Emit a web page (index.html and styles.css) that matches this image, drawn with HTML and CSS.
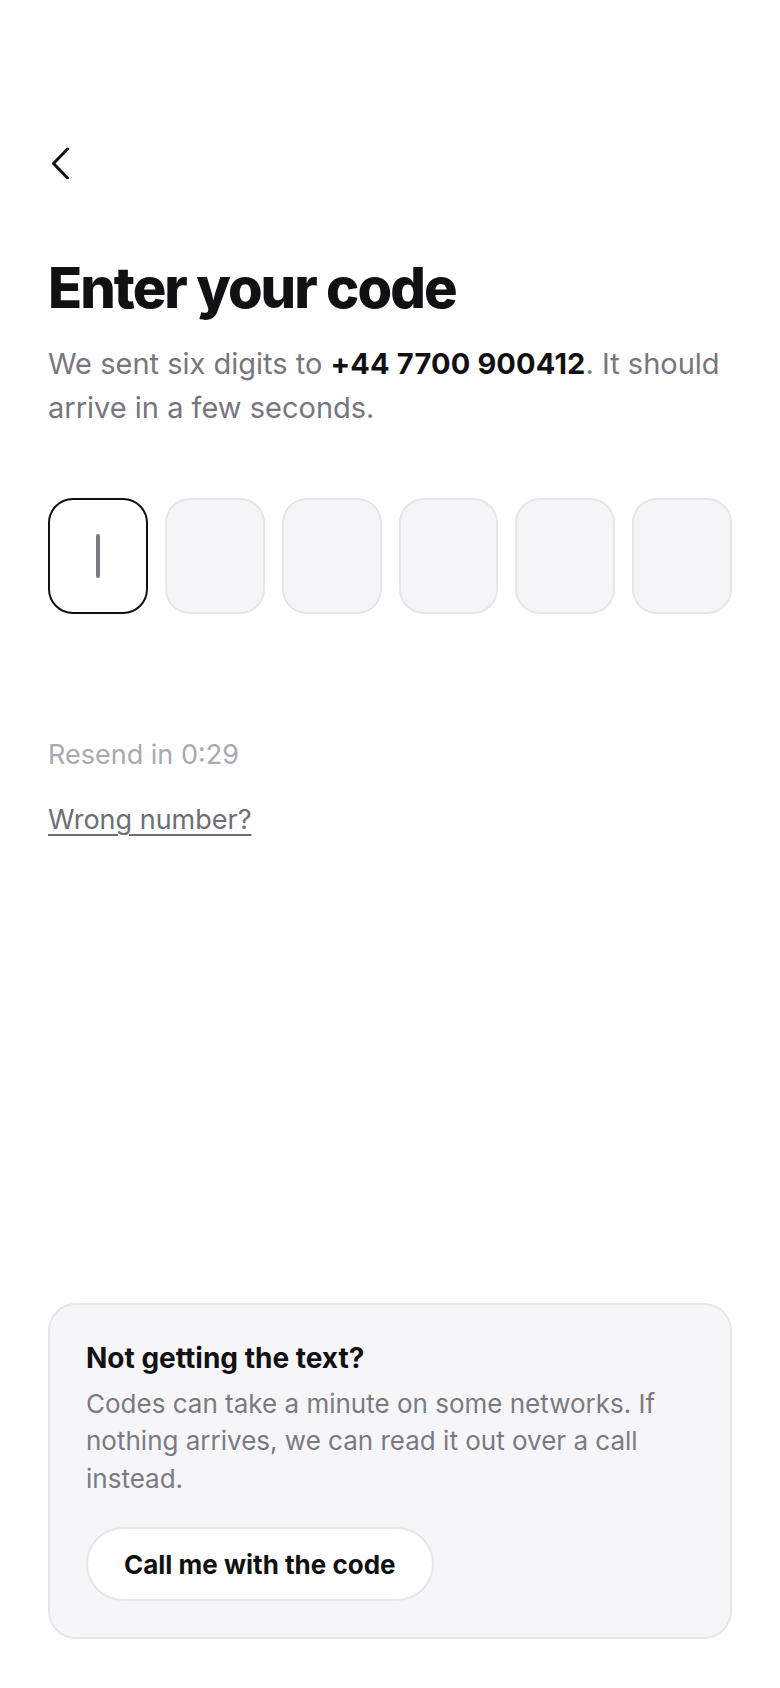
FILE: index.html
```html
<!DOCTYPE html>
<html lang="en">
<head>
<meta charset="utf-8">
<title>Enter your code</title>
<link rel="stylesheet" href="styles.css">
</head>
<body>
<main class="screen">
  <div class="top">
    <button class="back" aria-label="Back">
      <svg width="20" height="32" viewBox="0 0 20 32" fill="none" stroke="#111114" stroke-width="3" stroke-linecap="round" stroke-linejoin="round"><path d="M17.5 2 L3.5 16.5 L17.5 31"/></svg>
    </button>
    <h1 class="title">Enter your code</h1>
    <p class="lead">We sent six digits to <strong>+44 7700 900412</strong>. It should arrive in a few seconds.</p>
    <div class="otp">
      <div class="cell active"><span class="caret"></span></div>
      <div class="cell"></div>
      <div class="cell"></div>
      <div class="cell"></div>
      <div class="cell"></div>
      <div class="cell"></div>
    </div>
    <p class="resend">Resend in 0:29</p>
    <a class="wrong" href="#">Wrong number?</a>
  </div>
  <section class="help">
    <h2 class="help-title">Not getting the text?</h2>
    <p class="help-text">Codes can take a minute on some networks. If nothing arrives, we can read it out over a call instead.</p>
    <button class="call">Call me with the code</button>
  </section>
</main>
</body>
</html>
```

FILE: styles.css
```css
* { box-sizing: border-box; }
html, body { margin: 0; padding: 0; background: #ffffff; }
body {
  font-family: Inter, "Noto Sans", "Liberation Sans", sans-serif;
  color: #111114;
}
.screen {
  min-height: 1688px;
  display: flex;
  flex-direction: column;
  padding: 147px 48px 49px;
}
.top { display: flex; flex-direction: column; align-items: flex-start; }
.back {
  border: 0;
  background: none;
  padding: 0;
  margin: 0 0 0 2px;
  width: 20px;
  height: 32px;
  display: block;
  cursor: pointer;
}
.back svg { display: block; }
.title {
  margin: 79px 0 0;
  font-size: 56px;
  line-height: 60px;
  font-weight: 800;
  letter-spacing: -0.035em;
  color: #111114;
}
.lead {
  margin: 24px 0 0;
  font-size: 29px;
  line-height: 44px;
  color: #76767e;
  font-weight: 400;
}
.lead strong { color: #111114; font-weight: 700; letter-spacing: 0.005em; }
.otp {
  margin-top: 68px;
  width: 100%;
  display: grid;
  grid-template-columns: repeat(6, 1fr);
  gap: 17px;
}
.cell {
  height: 116px;
  border-radius: 25px;
  background: #f5f5f7;
  border: 2px solid #e6e6e9;
  display: flex;
  align-items: center;
  justify-content: center;
}
.cell.active {
  background: #ffffff;
  border-color: #111114;
}
.caret {
  width: 4px;
  height: 44px;
  border-radius: 2px;
  background: #7a7a7f;
}
.resend {
  margin: 121px 0 0;
  font-size: 27px;
  line-height: 40px;
  color: #a9a9b1;
}
.wrong {
  margin-top: 25px;
  font-size: 27px;
  line-height: 40px;
  color: #6e6e76;
  text-decoration: underline;
  text-underline-offset: 5px;
  text-decoration-thickness: 2px;
}
.help {
  margin-top: auto;
  background: #f6f6f8;
  border: 2px solid #e6e6e9;
  border-radius: 28px;
  padding: 35px 36px 36px;
}
.help-title {
  margin: 0;
  font-size: 28px;
  line-height: 36px;
  font-weight: 700;
  color: #111114;
}
.help-text {
  margin: 9px 0 0;
  font-size: 26px;
  line-height: 37.5px;
  color: #7a7a82;
}
.call {
  margin-top: 30px;
  height: 74px;
  padding: 0 36px;
  border-radius: 37px;
  background: #ffffff;
  border: 2px solid #e6e6e9;
  font-family: Inter, "Noto Sans", "Liberation Sans", sans-serif;
  font-size: 26px;
  font-weight: 700;
  color: #111114;
  cursor: pointer;
}
```
